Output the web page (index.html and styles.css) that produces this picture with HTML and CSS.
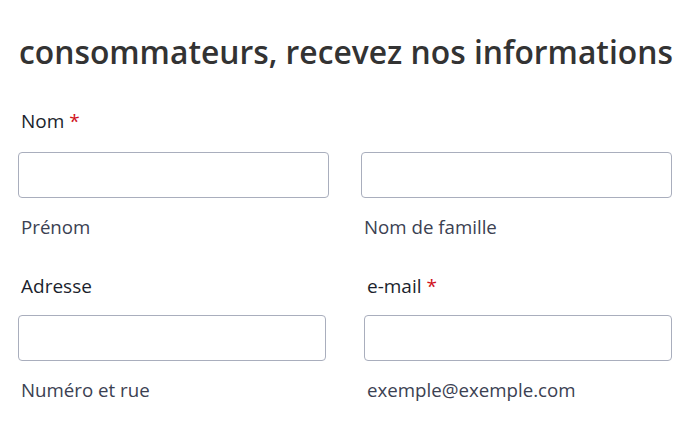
FILE: index.html
```html
<!DOCTYPE html>
<html lang="fr">
<head>
<meta charset="utf-8">
<link rel="stylesheet" href="styles.css">
<title>Inscription</title>
</head>
<body>
<form class="signup">
  <h2 class="signup-title">consommateurs, recevez nos informations</h2>

  <div class="field-label">Nom <span class="req">*</span></div>
  <div class="row row-name">
    <div class="field">
      <input class="text-input" type="text">
      <div class="hint">Prénom</div>
    </div>
    <div class="field">
      <input class="text-input" type="text">
      <div class="hint">Nom de famille</div>
    </div>
  </div>

  <div class="row row-contact">
    <div class="field">
      <div class="field-label">Adresse</div>
      <input class="text-input" type="text">
      <div class="hint">Numéro et rue</div>
    </div>
    <div class="field">
      <div class="field-label">e-mail <span class="req">*</span></div>
      <input class="text-input" type="email">
      <div class="hint">exemple@exemple.com</div>
    </div>
  </div>
</form>
</body>
</html>
```

FILE: styles.css
```css
html, body {
  margin: 0;
  padding: 0;
  background: #ffffff;
}

.signup {
  padding: 30px 18px 0 18px;
  font-family: "Open Sans", sans-serif;
}

.signup-title {
  margin: 0 0 0 1px;
  white-space: nowrap;
  font-weight: 600;
  font-size: 31.8px;
  line-height: 44px;
  color: #333333;
}

.field-label {
  margin: 0 0 0 3px;
  font-size: 19px;
  font-weight: 500;
  line-height: 24px;
  color: #1b1f2d;
}

.signup > .field-label {
  margin-top: 35px;
}

.req {
  color: #d0111b;
}

.row {
  display: grid;
}

.row-name {
  grid-template-columns: 311px 311px;
  column-gap: 32px;
  margin-top: 19px;
}

.row-contact {
  grid-template-columns: 308px 308px;
  column-gap: 38px;
  margin-top: 35px;
}

.row-contact .text-input {
  margin-top: 17px;
}

.text-input {
  display: block;
  box-sizing: border-box;
  width: 100%;
  height: 46px;
  margin: 0;
  border: 1px solid #a9aebd;
  border-radius: 4px;
  background: #ffffff;
}

.hint {
  margin: 17px 0 0 3px;
  font-size: 18.7px;
  line-height: 24px;
  color: #3b4152;
}
```
